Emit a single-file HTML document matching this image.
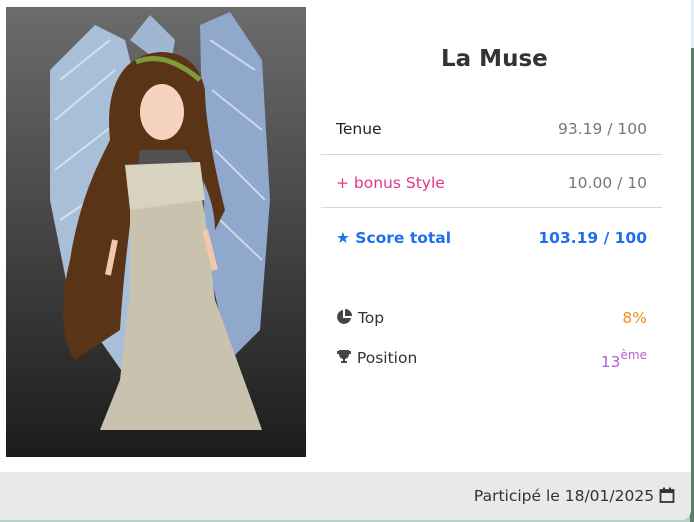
<!DOCTYPE html>
<html><head><meta charset="utf-8"><style>
*{margin:0;padding:0;box-sizing:border-box}
body{width:694px;height:522px;background:#b5d3c9;font-family:"DejaVu Sans",sans-serif;position:relative;overflow:hidden}
.edge{position:absolute;right:0;top:0;width:4px;height:48px;background:#dff0f4}
.edge2{position:absolute;right:0;top:48px;width:4px;height:474px;background:#5d7d6c}
.card{position:absolute;left:0;top:0;width:691px;height:520px;background:#fff;border-bottom-right-radius:10px;overflow:hidden}
.img{position:absolute;left:6px;top:7px;width:300px;height:450px;background:linear-gradient(#6c6c6c,#1c1c1c)}
.foot{position:absolute;left:0;top:472px;width:691px;height:48px;background:#e9e9e9;font-size:15.5px;color:#333}
.foot span{position:absolute;right:16px;top:15px}
.t{position:absolute;font-size:15.5px;line-height:20px}
.r{text-align:right;right:44px}
.hr{position:absolute;left:321px;width:341px;height:1px;background:#d8d8d8}
sup{font-size:12px;line-height:0;position:relative;top:-2px}
</style></head><body>
<div class="edge"></div><div class="edge2"></div>
<div class="card">
<div class="img"><svg width="300" height="450" viewBox="6 7 300 450">
<g fill="#a9bfd8">
<path d="M50 70 L95 25 L125 40 L135 80 L128 380 L100 340 L70 300 L50 200 Z"/>
<path d="M130 40 L150 15 L175 40 L170 70 Z" fill="#9fb7d3"/>
<path d="M200 25 L230 12 L262 60 L270 200 L260 330 L230 360 L205 250 Z" fill="#8fa8cc"/>
</g>
<g stroke="#e4eef8" stroke-width="2" opacity=".7">
<path d="M60 80 L110 40 M55 120 L115 70 M55 170 L120 120 M60 220 L120 180 M75 280 L125 240"/>
<path d="M210 40 L255 70 M212 90 L262 130 M215 150 L265 200 M220 220 L262 260"/>
</g>
<path d="M160 52 C120 55 105 90 110 140 C95 170 80 200 70 260 C60 300 60 340 75 360 L120 330 C125 250 135 190 140 150 L185 150 C200 170 215 200 215 230 L225 210 C215 170 205 120 205 90 C200 65 185 52 160 52Z" fill="#5a3416"/>
<ellipse cx="162" cy="112" rx="22" ry="28" fill="#f6d3bf"/>
<path d="M136 62 Q165 50 200 80" stroke="#7f9a3a" stroke-width="5" fill="none"/>
<path d="M130 170 L195 165 L205 215 L215 300 L255 410 L262 430 L100 430 L120 380 L130 290 Z" fill="#c9c2ae"/>
<path d="M125 165 L200 162 L205 200 L130 210 Z" fill="#d8d2c0"/>
<path d="M115 240 L108 275 M205 230 L215 270" stroke="#f2c8aa" stroke-width="6"/>
</svg></div>
<div class="t" style="left:441px;top:45px;font-size:23px;font-weight:bold;color:#333;line-height:28px">La Muse</div>
<div class="t" style="left:336px;top:119px;color:#222">Tenue</div>
<div class="t r" style="top:119px;color:#777">93.19 / 100</div>
<div class="hr" style="top:154px"></div>
<div class="t" style="left:336px;top:173px;color:#e6348a">+ bonus Style</div>
<div class="t r" style="top:173px;color:#777">10.00 / 10</div>
<div class="hr" style="top:207px"></div>
<div class="t" style="left:336px;top:228px;color:#1e6ff0;font-weight:bold">★ Score total</div>
<div class="t r" style="top:228px;color:#1e6ff0;font-weight:bold">103.19 / 100</div>
<div class="t" style="left:336px;top:308px;color:#333"><svg width="17" height="16" viewBox="0 0 17 16" style="vertical-align:-2px"><path d="M7 1 A7 7 0 1 0 15 9 L7 9Z" fill="#444"/><path d="M9 0 L9 7 L16 7 A7 7 0 0 0 9 0Z" fill="#444"/></svg> Top</div>
<div class="t r" style="top:308px;color:#f39019">8%</div>
<div class="t" style="left:336px;top:348px;color:#333"><svg width="16" height="15" viewBox="0 0 16 15" style="vertical-align:-1px"><path d="M3 1 H13 V5 Q13 9 9 10 V12 H11 V14 H5 V12 H7 V10 Q3 9 3 5Z M1 2 H3 V5 H1Z M13 2 H15 V5 H13Z" fill="#444"/></svg> Position</div>
<div class="t r" style="top:352px;color:#b45fd0">13<sup>ème</sup></div>
<div class="foot"><span>Participé le 18/01/2025 <svg width="16" height="16" viewBox="0 0 16 16" style="vertical-align:-2px"><rect x="1.5" y="3" width="13" height="12" fill="none" stroke="#333" stroke-width="1.8"/><rect x="1.5" y="3" width="13" height="3" fill="#333"/><rect x="4" y="0.5" width="2" height="4" fill="#333"/><rect x="10" y="0.5" width="2" height="4" fill="#333"/></svg></span></div>
</div>
</body></html>
